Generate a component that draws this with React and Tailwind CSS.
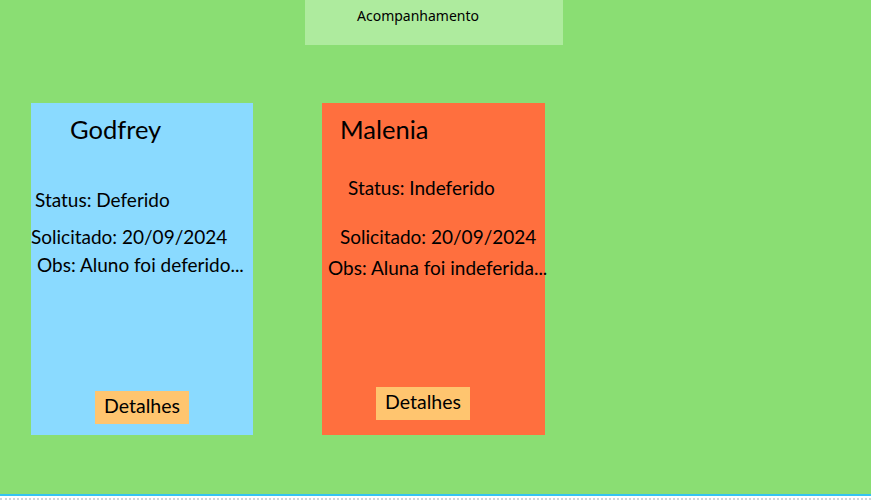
const pedidos = [
  {
    nome: "Godfrey",
    status: "Deferido",
    data: "20/09/2024",
    obs: "Aluno foi deferido...",
    cor: "bg-[#8adaff]",
  },
  {
    nome: "Malenia",
    status: "Indeferido",
    data: "20/09/2024",
    obs: "Aluna foi indeferida...",
    cor: "bg-[#ff6f3e]",
  },
];

function CardGodfrey({ p }) {
  return (
    <div className={`flex flex-col w-[222px] h-[332px] ${p.cor}`}>
      <h2 className="pt-[11px] pl-[39px] text-[25.5px] leading-[30px]">{p.nome}</h2>
      <p className="mt-[44px] pl-[4px] text-[19px] leading-[24px]">Status: {p.status}</p>
      <p className="mt-[13px] text-[19px] leading-[24px]">Solicitado: {p.data}</p>
      <p className="mt-[4px] pl-[6px] text-[19px] leading-[24px] whitespace-nowrap">Obs: {p.obs}</p>
      <button className="mt-auto mb-[11px] ml-[64px] w-[94px] h-[33px] pb-[4px] bg-[#ffc56f] text-[19.5px]">
        Detalhes
      </button>
    </div>
  );
}

function CardMalenia({ p }) {
  return (
    <div className={`flex flex-col w-[223px] h-[332px] ${p.cor}`}>
      <h2 className="pt-[11px] pl-[18px] text-[25.5px] leading-[30px]">{p.nome}</h2>
      <p className="mt-[32px] pl-[26px] text-[19px] leading-[24px]">Status: {p.status}</p>
      <p className="mt-[25px] pl-[18px] text-[19px] leading-[24px]">Solicitado: {p.data}</p>
      <p className="mt-[7px] pl-[6px] text-[19px] leading-[24px] whitespace-nowrap">Obs: {p.obs}</p>
      <button className="mt-auto mb-[15px] ml-[54px] w-[94px] h-[33px] pb-[4px] bg-[#ffc56f] text-[19.5px]">
        Detalhes
      </button>
    </div>
  );
}

export default function App() {
  return (
    <div className="w-[871px] h-[500px] bg-white text-black font-['Lato',sans-serif]">
      <div className="h-[494px] bg-[#8ade73] flex flex-col">
        {/* cabeçalho */}
        <div className="ml-[305px] w-[258px] h-[45px] bg-[#aeeb9e] pl-[52px] pt-[3px]">
          <span className="text-[14px] font-['Noto_Sans',sans-serif]">Acompanhamento</span>
        </div>
        {/* lista de pedidos */}
        <div className="flex mt-[58px] ml-[31px] gap-[69px]">
          <CardGodfrey p={pedidos[0]} />
          <CardMalenia p={pedidos[1]} />
        </div>
      </div>
      <div className="h-[2px] bg-[#35c3f2]"></div>
      <div className="h-[4px] border-b-2 border-dotted border-[#cfd3dc]"></div>
    </div>
  );
}
